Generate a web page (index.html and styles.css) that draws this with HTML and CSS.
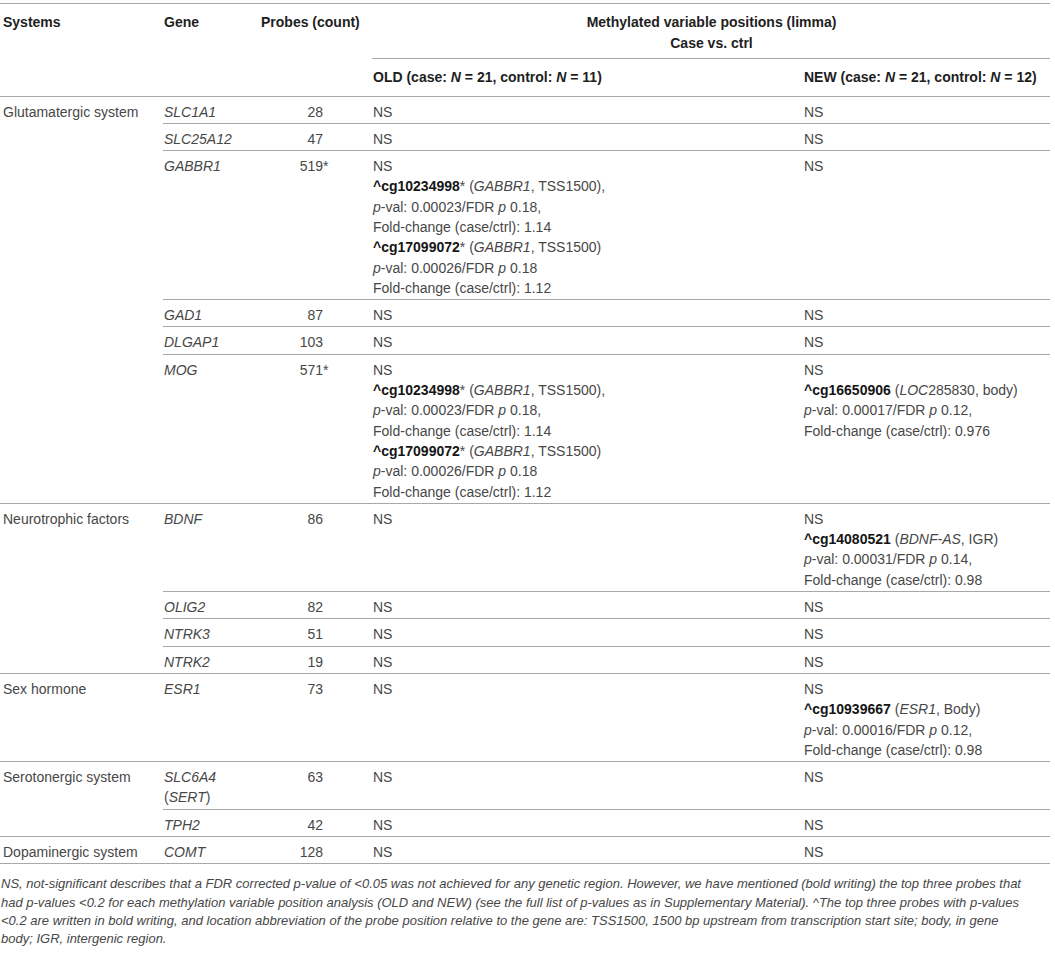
FILE: index.html
```html
<!DOCTYPE html>
<html lang="en">
<head>
<meta charset="utf-8">
<title>Methylated variable positions</title>
<link rel="stylesheet" href="styles.css">
</head>
<body>
<div class="page">
<table class="tbl">
  <colgroup>
    <col class="w-sys">
    <col class="w-gene">
    <col class="w-probes">
    <col class="w-old">
    <col class="w-new">
  </colgroup>
  <thead>
    <tr class="h1">
      <th rowspan="2" class="sys">Systems</th>
      <th rowspan="2">Gene</th>
      <th rowspan="2">Probes (count)</th>
      <th colspan="2" class="center">Methylated variable positions (limma)<br>Case vs. ctrl</th>
    </tr>
    <tr class="h2">
      <th>OLD (case: <i>N</i> = 21, control: <i>N</i> = 11)</th>
      <th>NEW (case: <i>N</i> = 21, control: <i>N</i> = 12)</th>
    </tr>
  </thead>
  <tbody>
    <tr>
      <td rowspan="6" class="sys">Glutamatergic system</td>
      <td><i>SLC1A1</i></td><td class="num">28</td><td>NS</td><td>NS</td>
    </tr>
    <tr><td><i>SLC25A12</i></td><td class="num">47</td><td>NS</td><td>NS</td></tr>
    <tr>
      <td><i>GABBR1</i></td><td class="num">519<span class="ast">*</span></td>
      <td>NS<br><b>^cg10234998</b>* (<i>GABBR1</i>, TSS1500),<br><i>p</i>-val: 0.00023/FDR <i>p</i> 0.18,<br>Fold-change (case/ctrl): 1.14<br><b>^cg17099072</b>* (<i>GABBR1</i>, TSS1500)<br><i>p</i>-val: 0.00026/FDR <i>p</i> 0.18<br>Fold-change (case/ctrl): 1.12</td>
      <td>NS</td>
    </tr>
    <tr><td><i>GAD1</i></td><td class="num">87</td><td>NS</td><td>NS</td></tr>
    <tr><td><i>DLGAP1</i></td><td class="num">103</td><td>NS</td><td>NS</td></tr>
    <tr>
      <td><i>MOG</i></td><td class="num">571<span class="ast">*</span></td>
      <td>NS<br><b>^cg10234998</b>* (<i>GABBR1</i>, TSS1500),<br><i>p</i>-val: 0.00023/FDR <i>p</i> 0.18,<br>Fold-change (case/ctrl): 1.14<br><b>^cg17099072</b>* (<i>GABBR1</i>, TSS1500)<br><i>p</i>-val: 0.00026/FDR <i>p</i> 0.18<br>Fold-change (case/ctrl): 1.12</td>
      <td>NS<br><b>^cg16650906</b> (<i>LOC</i>285830, body)<br><i>p</i>-val: 0.00017/FDR <i>p</i> 0.12,<br>Fold-change (case/ctrl): 0.976</td>
    </tr>
    <tr>
      <td rowspan="4" class="sys">Neurotrophic factors</td>
      <td><i>BDNF</i></td><td class="num">86</td><td>NS</td>
      <td>NS<br><b>^cg14080521</b> (<i>BDNF-AS</i>, IGR)<br><i>p</i>-val: 0.00031/FDR <i>p</i> 0.14,<br>Fold-change (case/ctrl): 0.98</td>
    </tr>
    <tr><td><i>OLIG2</i></td><td class="num">82</td><td>NS</td><td>NS</td></tr>
    <tr><td><i>NTRK3</i></td><td class="num">51</td><td>NS</td><td>NS</td></tr>
    <tr><td><i>NTRK2</i></td><td class="num">19</td><td>NS</td><td>NS</td></tr>
    <tr>
      <td class="sys">Sex hormone</td>
      <td><i>ESR1</i></td><td class="num">73</td><td>NS</td>
      <td>NS<br><b>^cg10939667</b> (<i>ESR1</i>, Body)<br><i>p</i>-val: 0.00016/FDR <i>p</i> 0.12,<br>Fold-change (case/ctrl): 0.98</td>
    </tr>
    <tr>
      <td rowspan="2" class="sys">Serotonergic system</td>
      <td><i>SLC6A4</i><br>(<i>SERT</i>)</td><td class="num">63</td><td>NS</td><td>NS</td>
    </tr>
    <tr><td><i>TPH2</i></td><td class="num">42</td><td>NS</td><td>NS</td></tr>
    <tr>
      <td class="sys">Dopaminergic system</td>
      <td><i>COMT</i></td><td class="num">128</td><td>NS</td><td>NS</td>
    </tr>
  </tbody>
</table>
<p class="note">NS, not-significant describes that a FDR corrected p-value of &lt;0.05 was not achieved for any genetic region. However, we have mentioned (bold writing) the top three probes that had p-values &lt;0.2 for each methylation variable position analysis (OLD and NEW) (see the full list of p-values as in Supplementary Material). ^The top three probes with p-values &lt;0.2 are written in bold writing, and location abbreviation of the probe position relative to the gene are: TSS1500, 1500 bp upstream from transcription start site; body, in gene body; IGR, intergenic region.</p>
</div>
</body>
</html>
```

FILE: styles.css
```css
html, body {
  margin: 0;
  padding: 0;
  background: #ffffff;
}

.page {
  padding: 3px 0 0 0;
  width: 1050px;
  font-family: "Liberation Sans", Arial, Helvetica, sans-serif;
  color: #474747;
}

.tbl {
  width: 1050px;
  border-collapse: collapse;
  table-layout: fixed;
  font-size: 14px;
  line-height: 20.3px;
}

.w-sys { width: 163px; }
.w-gene { width: 97px; }
.w-probes { width: 112px; }
.w-old { width: 431px; }
.w-new { width: 247px; }

.tbl th {
  text-align: left;
  vertical-align: top;
  font-weight: bold;
  color: #1e1e1e;
  padding: 8px 0 5px 1px;
  line-height: 20.5px;
}

.tbl .h1 th {
  border-top: 1px solid #a8a8a8;
  border-bottom: 1px solid #a8a8a8;
}

.tbl .h2 th {
  padding: 8px 0 8px 1px;
  border-bottom: 1px solid #a8a8a8;
}

.tbl th.center {
  text-align: center;
}

.tbl th.sys,
.tbl td.sys {
  padding-left: 3px;
}

.tbl td {
  vertical-align: top;
  padding: 5px 0 1px 1px;
  border-bottom: 1px solid #a8a8a8;
}

.tbl td b {
  color: #151515;
}

.tbl td.num {
  text-align: right;
  padding-right: 49px;
}

.ast {
  display: inline-block;
  width: 0;
}

.note {
  width: 1027px;
  margin: 11px 0 0 1px;
  font-size: 13px;
  line-height: 18.2px;
  font-style: italic;
  color: #474747;
}
```
